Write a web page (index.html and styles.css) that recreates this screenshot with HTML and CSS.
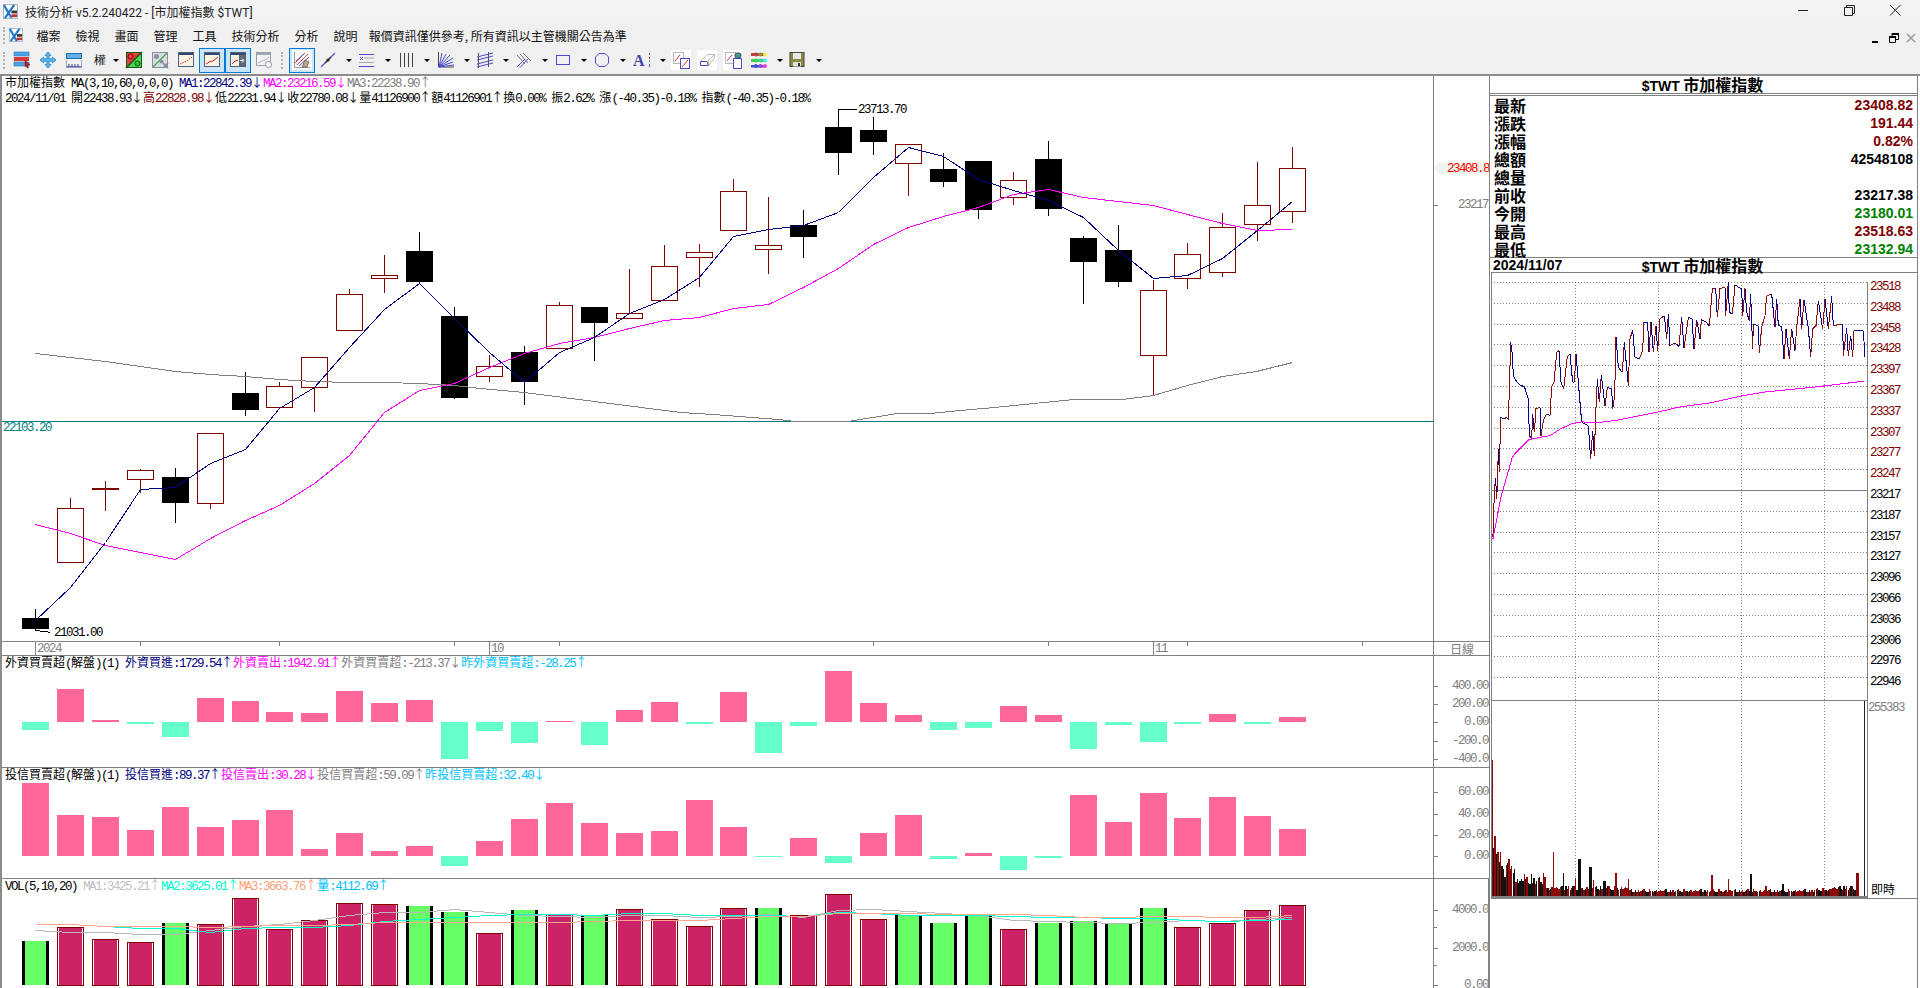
FILE: index.html
```html
<!DOCTYPE html>
<html lang="zh-Hant">
<head>
  <meta charset="UTF-8" />
  <title>技術分析 v5.2.240422 - [市加權指數 $TWT]</title>
  <link rel="stylesheet" href="styles.css">
</head>
<body>
  <!-- Window title -->
  <div class="titlebar">
    <svg class="logo" viewBox="0 0 16 16"><rect x="0.500" y="0.500" width="15" height="15" fill="#fff" stroke="#a8b4c4"/><path d="M1 1 L9 15 M12 1 L2 15" stroke="#1f78c8" stroke-width="2.400" fill="none"/><rect x="9" y="7" width="6" height="3" fill="#333"/><rect x="9" y="11" width="6" height="3" fill="#c03030"/></svg>
    <span class="title-text">技術分析 v5.2.240422 - [市加權指數 $TWT]</span>
    <div class="win-btns">
      <svg class="win-btn" viewBox="0 0 46 16"><path d="M18 8.500 H28" stroke="#222"/></svg>
      <svg class="win-btn" viewBox="0 0 46 16"><path d="M18.500 5.500 H26.500 V13.500 H18.500 Z M20.500 5 V3.500 H28.500 V11.500 H27" stroke="#222" fill="none"/></svg>
      <svg class="win-btn" viewBox="0 0 46 16"><path d="M18 3 L28.500 13.500 M28.500 3 L18 13.500" stroke="#222" fill="none"/></svg>
    </div>
  </div>

  <!-- Menu -->
  <div class="menubar">
    <span class="grip"></span>
    <svg class="logo logo-menu" viewBox="0 0 16 16"><rect x="0.500" y="0.500" width="15" height="15" fill="#fff" stroke="#a8b4c4"/><path d="M1 1 L9 15 M12 1 L2 15" stroke="#1f78c8" stroke-width="2.400" fill="none"/><rect x="9" y="7" width="6" height="3" fill="#333"/><rect x="9" y="11" width="6" height="3" fill="#c03030"/></svg>
    <span class="menu-item">檔案</span>
    <span class="menu-item">檢視</span>
    <span class="menu-item">畫面</span>
    <span class="menu-item">管理</span>
    <span class="menu-item">工具</span>
    <span class="menu-item">技術分析</span>
    <span class="menu-item">分析</span>
    <span class="menu-item">說明</span>
    <span class="menu-item menu-note">報價資訊僅供參考, 所有資訊以主管機關公告為準</span>
    <div class="mdi-btns">
      <svg class="mdi-btn" viewBox="0 0 14 14"><rect x="2" y="10" width="6" height="2" fill="#000"/></svg>
      <svg class="mdi-btn" viewBox="0 0 14 14"><path d="M2.500 5.500 H8.500 V11.500 H2.500 Z M5 5 V2.500 H11.500 V8.500 H9" stroke="#000" fill="none"/><rect x="2" y="5" width="7" height="2"/><rect x="5" y="2" width="7" height="2"/></svg>
      <svg class="mdi-btn" viewBox="0 0 14 14"><path d="M3 3 L11 11 M11 3 L3 11" stroke="#999" stroke-width="1.500"/></svg>
    </div>
  </div>

  <!-- Tool buttons -->
  <div class="toolbar">
    <span class="grip"></span>
    <button class="tool"><svg class="ico" viewBox="0 0 16 16"><rect x="0" y="0" width="15" height="4" fill="#4aa3e0" stroke="#2a7ab8" stroke-width="0.600"/><rect x="0" y="5" width="15" height="4" fill="#d83838"/><rect x="0" y="10" width="15" height="4" fill="#4aa3e0" stroke="#2a7ab8" stroke-width="0.600"/><path d="M11 8 L16 13 H13.500 L14.500 16 L13 16 L12 13.500 L11 15 Z" fill="#c02020" stroke="#701010" stroke-width="0.400"/></svg></button>
    <button class="tool"><svg class="ico" viewBox="0 0 16 16"><path d="M8 0 L11 3.500 H9.200 V6.800 H12.500 V5 L16 8 L12.500 11 V9.200 H9.200 V12.500 H11 L8 16 L5 12.500 H6.800 V9.200 H3.500 V11 L0 8 L3.500 5 V6.800 H6.800 V3.500 H5 Z" fill="#58b4ee" stroke="#1f7fc4" stroke-width="0.700"/></svg></button>
    <button class="tool"><svg class="ico" viewBox="0 0 16 16"><rect x="0.500" y="1.500" width="15" height="5" fill="#5fb2ea" stroke="#1f6fa8"/><path d="M0.500 8 V14.500 H15.500 V8" fill="none" stroke="#a8a8c8"/><path d="M0 15 H16 M3 12 V15 M6 12 V15 M9 12 V15 M12 12 V15" stroke="#4040a0" fill="none"/></svg></button>
    <button class="tool"><span class="tool-text">權</span></button>
    <span class="drop drop-narrow"></span>
    <button class="tool"><svg class="ico" viewBox="0 0 16 16"><path d="M0 0 H16 L0 16 Z" fill="#e04040"/><path d="M16 0 V16 H0 Z" fill="#50d050"/><path d="M16 0 L0 16" stroke="#0c5c0c" stroke-width="1.400"/><rect x="0.500" y="0.500" width="15" height="15" fill="none" stroke="#155c15"/><circle cx="4.500" cy="4.500" r="2.500" fill="#f04040" stroke="#800"/><circle cx="11.500" cy="11.500" r="2.500" fill="#30c030" stroke="#0a600a"/></svg></button>
    <button class="tool"><svg class="ico" viewBox="0 0 16 16"><rect x="0.500" y="0.500" width="15" height="15" fill="#d8dce0" stroke="#8a90a0"/><path d="M15 1 L1 15" stroke="#4ca84c" stroke-width="1.200"/><circle cx="4.500" cy="4.500" r="2.500" fill="#8890a0"/><circle cx="9.500" cy="9.500" r="2" fill="#8890a0"/><path d="M11 11 L16 16 M16 11 L11 16" stroke="#808898" stroke-width="1.500"/></svg></button>
    <button class="tool"><svg class="ico" viewBox="0 0 16 16"><rect x="0.500" y="0.500" width="15" height="14" fill="#f8f4e4" stroke="#50607c"/><rect x="1" y="1" width="14" height="2" fill="#304878"/><path d="M2 12 L6 10 L9 9 L14 5" stroke="#e02020" stroke-dasharray="1.500 1" fill="none"/></svg></button>
    <button class="tool tool-on"><svg class="ico" viewBox="0 0 16 16"><rect x="0.500" y="0.500" width="15" height="14" fill="#f8f4e4" stroke="#50607c"/><rect x="1" y="1" width="14" height="2" fill="#304878"/><path d="M2 12 L6 9.500 L9 9 L14 5" stroke="#e02020" fill="none"/></svg></button>
    <button class="tool tool-on"><svg class="ico" viewBox="0 0 16 16"><rect x="0.500" y="0.500" width="15" height="14" fill="#f8f4e4" stroke="#50607c"/><rect x="1" y="1" width="14" height="2" fill="#304878"/><rect x="9" y="3" width="6" height="11" fill="#606870"/><path d="M2 12 L5 9 L8 8" stroke="#e02020" fill="none"/><path d="M10 8.500 H13 M12 6.500 L14 8.500 L12 10.500" stroke="#fff" fill="none"/></svg></button>
    <button class="tool"><svg class="ico" viewBox="0 0 16 16"><rect x="0.500" y="0.500" width="14" height="13" fill="#f2f2f2" stroke="#9aa0ac"/><rect x="1" y="1" width="13" height="2" fill="#a0a8b8"/><path d="M2 11 L6 9 L9 8 L13 5" stroke="#b8b8b8" fill="none"/><circle cx="12.500" cy="12.500" r="3" fill="#fff" stroke="#8a92a0"/></svg></button>
    <span class="grip grip-mid"></span>
    <button class="tool tool-on tool-white"><svg class="ico" viewBox="0 0 16 16"><path d="M0.500 0 V15.500 H16" stroke="#9a9aa8" fill="none"/><path d="M1 11 L11 1 M3 13 L14 2" stroke="#e04848" fill="none"/><path d="M2 9 L10 2 M5 14 L15 5" stroke="#5050c0" fill="none"/><path d="M8 15 L11 8 L15 10 L13 15 Z" fill="#b8a890" stroke="#704848" stroke-width="0.700"/></svg></button>
    <button class="tool"><svg class="ico" viewBox="0 0 16 16"><path d="M1 15 L15 1" stroke="#4a4ad0" stroke-width="1.100"/><path d="M5 11 L11 5" stroke="#333" stroke-width="1.300"/><circle cx="8" cy="8" r="1.500" fill="#222"/></svg></button>
    <span class="drop"></span>
    <button class="tool"><svg class="ico" viewBox="0 0 16 16"><path d="M0 2.500 H15 M0 14.500 H15" stroke="#4a4ad0"/><path d="M5 6 H15 M0 10.500 H15" stroke="#aaa"/><path d="M1 5 L4 8 M4 5 L1 8" stroke="#4a4ad0"/></svg></button>
    <span class="drop"></span>
    <button class="tool"><svg class="ico" viewBox="0 0 16 16"><path d="M2.500 1 V15 M6.500 1 V15 M10.500 1 V15 M14.500 1 V15" stroke="#444"/></svg></button>
    <span class="drop"></span>
    <button class="tool"><svg class="ico" viewBox="0 0 16 16"><path d="M0.500 0 V15 H16" stroke="#444" fill="none"/><path d="M1 15 L4 1 M1 15 L8 2 M1 15 L12 3 M1 15 L15 6 M1 15 L15 10 M1 15 L16 13" stroke="#4a4ad0"/></svg></button>
    <span class="drop"></span>
    <button class="tool"><svg class="ico" viewBox="0 0 16 16"><path d="M0 5 L16 1 M0 8 L16 4 M0 12 L16 8 M0 15 L16 11" stroke="#4a4ad0"/><path d="M1.500 1 V16 M11.500 0 V15" stroke="#555"/></svg></button>
    <span class="drop"></span>
    <button class="tool"><svg class="ico" viewBox="0 0 16 16"><path d="M1 15 L9 7 M4 15.500 L13 6" stroke="#4a4ad0"/><path d="M1 3 L9 12 M4 2 L12 11 M7 1 L15 9" stroke="#777"/></svg></button>
    <span class="drop"></span>
    <button class="tool"><svg class="ico" viewBox="0 0 16 16"><rect x="1.500" y="3.500" width="13" height="9" fill="none" stroke="#4a4ad8"/></svg></button>
    <span class="drop"></span>
    <button class="tool"><svg class="ico" viewBox="0 0 16 16"><path d="M5 1.500 H11 L14.500 5 V11 L11 14.500 H5 L1.500 11 V5 Z" fill="none" stroke="#4a4ad8"/></svg></button>
    <span class="drop"></span>
    <button class="tool"><svg class="ico ico-wide" viewBox="0 0 18 16"><text x="0" y="14" class="ico-a">A</text><path d="M16.500 1 V3 M16.500 5 V7" stroke="#b04040"/><path d="M16.500 8 V10" stroke="#40a040"/><path d="M16.500 12 V15" stroke="#4a4ad0"/></svg></button>
    <span class="drop"></span>
    <button class="tool tool-page"><svg class="ico ico-page" viewBox="0 0 20 20"><rect width="20" height="20" fill="#fff"/><rect x="2.500" y="2.500" width="10" height="11" fill="#fff" stroke="#bbb"/><rect x="9.500" y="8.500" width="9" height="10" fill="#fff" stroke="#4a4ad0"/><path d="M4 11 L9 5" stroke="#e03030"/><path d="M11 17 L17 10" stroke="#e03030"/></svg></button>
    <button class="tool tool-page"><svg class="ico ico-page" viewBox="0 0 20 20"><rect width="20" height="20" fill="#fff"/><path d="M3.500 11.500 L10 4.500 H17.500 V8 L11.500 15.500 H3.500 Z" fill="#fff" stroke="#bbb"/><path d="M3.500 11.500 H10 L11.500 15.500 H3.500 Z" fill="#fff" stroke="#4a4ad0"/><path d="M10.500 11.500 L17.500 4.500" stroke="#bbb"/><path d="M11 11 V15" stroke="#a0a030"/></svg></button>
    <button class="tool tool-page"><svg class="ico ico-page" viewBox="0 0 20 20"><rect width="20" height="20" fill="#fff"/><rect x="2.500" y="2.500" width="10" height="11" fill="#fff" stroke="#bbb"/><rect x="10.500" y="8.500" width="8" height="10" fill="#fff" stroke="#4a4ad0"/><path d="M4 11 L9 5" stroke="#e03030"/><rect x="12" y="3" width="6" height="5" rx="2" fill="#40a080" stroke="#404080"/></svg></button>
    <button class="tool"><svg class="ico" viewBox="0 0 16 16"><rect x="0" y="1" width="15" height="3" fill="#c04040"/><circle cx="5" cy="2.500" r="2" fill="#c04040"/><circle cx="9.500" cy="2.500" r="2" fill="#909040"/><circle cx="14" cy="2.500" r="2" fill="#f4f040"/><rect x="0" y="7" width="15" height="3" fill="#40d050"/><circle cx="5" cy="8.500" r="2" fill="#40d050"/><circle cx="9.500" cy="8.500" r="2" fill="#40d0a0"/><circle cx="14" cy="8.500" r="2" fill="#40f0f0"/><rect x="0" y="13" width="15" height="2.500" fill="#4050d0"/><circle cx="5" cy="14" r="2" fill="#4050d0"/><circle cx="9.500" cy="14" r="2" fill="#a040d0"/><circle cx="14" cy="14" r="2" fill="#f040e0"/></svg></button>
    <span class="drop"></span>
    <button class="tool"><svg class="ico" viewBox="0 0 16 16"><rect x="0" y="0.500" width="14" height="14" fill="#8a8a40" stroke="#444"/><rect x="3" y="1" width="8" height="6" fill="#e8e8e8"/><rect x="3" y="10" width="8" height="4.500" fill="#e0e0e0"/><rect x="8" y="11" width="2" height="3" fill="#333"/></svg></button>
    <span class="drop"></span>
  </div>

  <div class="workspace">
    <div class="charts">
      <!-- Price pane -->
      <section class="pane pane-price">
        <div class="plot">
          <div class="legend">
            <div class="legend-row"><span class="cj">市加權指數</span> MA(3,10,60,0,0,0) <span class="c-navy">MA1:22842.39<span class="cj">↓</span></span><span class="c-pink">MA2:23216.59<span class="cj">↓</span></span><span class="c-gray">MA3:22238.90<span class="cj">↑</span></span></div>
            <div class="legend-row">2024/11/01 <span class="cj">開</span>22438.93<span class="cj">↓</span><span class="c-red"><span class="cj">高</span>22828.98<span class="cj">↓</span></span><span class="cj">低</span>22231.94<span class="cj">↓</span><span class="cj">收</span>22780.08<span class="cj">↓</span><span class="cj">量</span>41126900<span class="cj">↑</span><span class="cj">額</span>41126901<span class="cj">↑</span><span class="cj">換</span>0.00% <span class="cj">振</span>2.62% <span class="cj">漲</span>(-40.35)-0.18% <span class="cj">指數</span>(-40.35)-0.18%</div>
          </div>
          <svg id="priceChart" class="canvas" viewBox="2 76 1431 565" width="1431" height="565"></svg>
        </div>
        <div class="axis"><svg id="priceAxis" class="canvas" viewBox="1434 76 55 565" width="55" height="565"></svg></div>
      </section>

      <!-- Date row -->
      <section class="pane pane-time">
        <div class="plot"><svg id="timeChart" class="canvas" viewBox="2 642 1431 13" width="1431" height="13"></svg></div>
        <div class="axis axis-period"><span class="cj">日線</span></div>
      </section>

      <!-- Foreign investors -->
      <section class="pane pane-foreign">
        <div class="plot">
          <div class="legend">
            <div class="legend-row"><span class="cj">外資買賣超</span>(<span class="cj">解盤</span>)(1) <span class="c-navy"><span class="cj">外資買進</span>:1729.54<span class="cj">↑</span></span><span class="c-pink"><span class="cj">外資賣出</span>:1942.91<span class="cj">↑</span></span><span class="c-gray"><span class="cj">外資買賣超</span>:-213.37<span class="cj">↓</span></span><span class="c-sky"><span class="cj">昨外資買賣超</span>:-28.25<span class="cj">↑</span></span></div>
          </div>
          <svg id="foreignChart" class="canvas" viewBox="2 656 1431 111" width="1431" height="111"></svg>
        </div>
        <div class="axis"><svg id="foreignAxis" class="canvas" viewBox="1434 656 55 111" width="55" height="111"></svg></div>
      </section>

      <!-- Trust funds -->
      <section class="pane pane-trust">
        <div class="plot">
          <div class="legend">
            <div class="legend-row"><span class="cj">投信買賣超</span>(<span class="cj">解盤</span>)(1) <span class="c-navy"><span class="cj">投信買進</span>:89.37<span class="cj">↑</span></span><span class="c-pink"><span class="cj">投信賣出</span>:30.28<span class="cj">↓</span></span><span class="c-gray"><span class="cj">投信買賣超</span>:59.09<span class="cj">↑</span></span><span class="c-sky"><span class="cj">昨投信買賣超</span>:32.40<span class="cj">↓</span></span></div>
          </div>
          <svg id="trustChart" class="canvas" viewBox="2 768 1431 110" width="1431" height="110"></svg>
        </div>
        <div class="axis"><svg id="trustAxis" class="canvas" viewBox="1434 768 55 110" width="55" height="110"></svg></div>
      </section>

      <!-- Volume -->
      <section class="pane pane-vol">
        <div class="plot">
          <div class="legend">
            <div class="legend-row">VOL(5,10,20) <span class="c-silver">MA1:3425.21<span class="cj">↑</span></span><span class="c-aqua">MA2:3625.01<span class="cj">↑</span></span><span class="c-salmon">MA3:3663.76<span class="cj">↑</span></span><span class="c-sky"><span class="cj">量</span>:4112.69<span class="cj">↑</span></span></div>
          </div>
          <svg id="volChart" class="canvas" viewBox="2 879 1431 109" width="1431" height="109"></svg>
        </div>
        <div class="axis"><svg id="volAxis" class="canvas" viewBox="1434 879 54 109" width="54" height="109"></svg></div>
      </section>
    </div>

    <!-- Quote panel -->
    <aside class="side">
      <div class="side-head"><span class="lat">$TWT</span> 市加權指數</div>
      <div class="quote">
        <div class="quote-row"><span>最新</span><span class="val up">23408.82</span></div>
        <div class="quote-row"><span>漲跌</span><span class="val up">191.44</span></div>
        <div class="quote-row"><span>漲幅</span><span class="val up">0.82%</span></div>
        <div class="quote-row"><span>總額</span><span class="val">42548108</span></div>
        <div class="quote-row"><span>總量</span><span class="val"></span></div>
        <div class="quote-row"><span>前收</span><span class="val">23217.38</span></div>
        <div class="quote-row"><span>今開</span><span class="val down">23180.01</span></div>
        <div class="quote-row"><span>最高</span><span class="val up">23518.63</span></div>
        <div class="quote-row"><span>最低</span><span class="val down">23132.94</span></div>
      </div>
      <div class="day-head"><span class="day-date">2024/11/07</span><span class="lat">$TWT</span> 市加權指數</div>
      <svg id="dayChart" class="day-chart" viewBox="1490 273 427 715" width="427" height="715"></svg>
    </aside>
  </div>

  <script src="chart.js"></script>
</body>
</html>
```

FILE: styles.css
```css
html, body {
  margin: 0;
  height: 988px;
  overflow: hidden;
  background: #fff;
  font-family: "Noto Sans CJK TC", sans-serif;
  font-size: 12px;
  color: #000;
}

/* title, menu, toolbar */
.titlebar {
  height: 23px;
  display: flex;
  align-items: center;
  background: #f3f3f5;
}
.logo {
  width: 15px;
  height: 15px;
  margin-left: 3px;
  flex: none;
}
.title-text {
  margin-left: 7px;
  flex: none;
  font-family: Roboto, "Noto Sans CJK TC", sans-serif;
  font-size: 12px;
  color: #222;
}
.win-btns {
  margin-left: auto;
  display: flex;
  margin-right: 2px;
}
.win-btn {
  width: 46px;
  height: 16px;
  margin-top: -3px;
}
.menubar {
  height: 24px;
  padding-bottom: 1px;
  display: flex;
  align-items: center;
  background: #f0f0f0;
  font-size: 12px;
  color: #111;
}
.grip {
  width: 2px;
  height: 17px;
  margin: 0 2px 0 3px;
  flex: none;
  border-left: 2px dotted #b0b0b0;
}
.logo-menu {
  margin: 0 6px 0 0;
  width: 14px;
  height: 14px;
}
.menu-item {
  padding: 0 7.500px;
  white-space: nowrap;
}
.menu-note {
  padding-left: 3.500px;
}
.mdi-btns {
  margin-left: auto;
  display: flex;
  margin-right: 2px;
  margin-top: 5px;
}
.mdi-btn {
  width: 14px;
  height: 14px;
  margin-left: 3px;
}
.toolbar {
  height: 24px;
  padding-bottom: 2px;
  display: flex;
  align-items: center;
  background: #f0f0f0;
}
.tool {
  width: 26px;
  height: 25px;
  padding: 0;
  flex: none;
  border: none;
  background: none;
  display: flex;
  align-items: center;
  justify-content: center;
}
.tool-on {
  border: 1px solid #0078d7;
  background: #cce4f7;
}
.tool-white .ico {
  background: #fff;
  padding: 2px;
}
.tool-text {
  font-size: 12px;
  color: #111;
}
.ico {
  width: 16px;
  height: 16px;
  overflow: visible;
  box-sizing: content-box;
}
.ico-wide {
  width: 18px;
}
.ico-page {
  width: 20px;
  height: 20px;
}
.ico-a {
  font: bold 16px "Liberation Serif", serif;
  fill: #4444a8;
}
.drop {
  width: 13.2px;
  height: 3px;
  flex: none;
  position: relative;
}
.drop::after {
  content: "";
  position: absolute;
  left: 5px;
  top: 0;
  border-left: 3px solid transparent;
  border-right: 3px solid transparent;
  border-top: 3px solid #000;
}
.drop-narrow {
  width: 8px;
}
.drop-narrow::after {
  left: 0;
}
.toolbar .grip-mid {
  margin: 0 4px 0 4px;
}

/* chart column */
.workspace {
  height: 912px;
  display: flex;
  border-top: 2px solid #8c8c8c;
  border-left: 2px solid #8c8c8c;
}
.charts {
  width: 1487px;
  flex: none;
}
.pane {
  display: flex;
  border-bottom: 1px solid #808080;
}
.pane-price { height: 565px; }
.pane-time { height: 13px; }
.pane-foreign { height: 111px; }
.pane-trust { height: 110px; }
.pane-vol { height: 109px; border-bottom: none; }
.plot {
  position: relative;
  width: 1431px;
  flex: none;
}
.canvas {
  position: absolute;
  left: 0;
  top: 0;
  display: block;
}
.axis {
  position: relative;
  flex: 1;
  border-left: 1px solid #808080;
  overflow: hidden;
}
.pane-vol .axis {
  border-right: 1px solid #808080;
}
.axis-period {
  padding-left: 16px;
  font-size: 12px;
  line-height: 14px;
  color: #808080;
}
.legend {
  position: relative;
  z-index: 1;
  display: flex;
  flex-direction: column;
  gap: 1px;
  margin-top: -1px;
  padding-left: 3px;
}
.legend-row {
  font: 12.500px/14px "Liberation Mono", monospace;
  letter-spacing: -1.500px;
  white-space: pre;
  height: 14px;
}
.cj {
  font-family: "Noto Sans CJK TC", sans-serif;
  font-size: 12px;
  letter-spacing: 0;
}
.c-navy { color: #000080; }
.c-pink { color: #ff00ff; }
.c-gray { color: #808080; }
.c-red { color: #800000; }
.c-sky { color: #00bfff; }
.c-silver { color: #c0c0c0; }
.c-aqua { color: #00ffcc; }
.c-salmon { color: #ffa07a; }

/* svg text */
.num {
  font: 12.500px "Liberation Mono", monospace;
  letter-spacing: -1.500px;
  fill: #000;
}
.num-gray { fill: #808080; }
.num-red { fill: #ff0000; }
.num-dark { fill: #800000; }
.num-teal { fill: #008080; }
.zh-label {
  font: 12px "Noto Sans CJK TC", sans-serif;
  fill: #000;
}

/* quote panel */
.side {
  flex: 1;
  border-left: 1px solid #808080;
  border-right: 1px solid #808080;
  margin-right: 2px;
  min-width: 0;
}
.side-head {
  height: 18px;
  line-height: 17px;
  text-align: center;
  font-size: 16px;
  font-weight: 700;
  padding-right: 2px;
  border-bottom: 1px solid #808080;
  box-sizing: border-box;
}
.lat {
  font: bold 14px "Liberation Sans", sans-serif;
}
.quote {
  height: 161px;
  margin-top: 1px;
  border-top: 1px solid #808080;
  border-bottom: 1px solid #808080;
}
.quote-row {
  height: 18px;
  display: flex;
  justify-content: space-between;
  align-items: center;
  padding: 0 4px;
  font-size: 16px;
  font-weight: 700;
  line-height: 18px;
}
.quote .quote-row:last-child {
  height: 17px;
}
.val {
  font: bold 14px/18px "Liberation Sans", sans-serif;
}
.up { color: #800000; }
.down { color: #008000; }
.day-head {
  height: 14px;
  position: relative;
  font-size: 16px;
  font-weight: 700;
  line-height: 15px;
  text-align: center;
  padding-right: 2px;
}
.day-date {
  position: absolute;
  left: 3px;
  top: 0;
  font: bold 14px/15px "Liberation Sans", sans-serif;
}
.day-chart {
  display: block;
}
```

FILE: chart.js
```js
// candle centres, one per trading day
const xs = [35,70,105,140,175,210,245,279,314,349,384,419,454,489,524,559,594,629,664,699,733,768,803,838,873,908,943,978,1013,1048,1083,1118,1153,1187,1222,1257,1292];

// high, body top, body bottom, low, r = hollow red / k = black
const candles = [
  [609,618,629,630,"k"],[498,508,562,562,"r"],[481,488,488,510,"r"],[469,470,479,492,"r"],
  [468,477,503,522,"k"],[433,433,503,508,"r"],[372,393,410,415,"k"],[382,386,407,407,"r"],
  [357,357,387,411,"r"],[289,294,330,330,"r"],[255,275,278,292,"r"],[232,251,282,283,"k"],
  [307,316,398,398,"k"],[355,366,376,381,"r"],[346,352,382,404,"k"],[302,305,348,348,"r"],
  [307,307,323,360,"k"],[269,313,318,318,"r"],[245,266,300,300,"r"],[244,252,257,286,"r"],
  [179,191,230,230,"r"],[197,245,249,273,"r"],[210,225,237,257,"k"],[109,127,153,174,"k"],
  [117,130,142,154,"k"],[144,144,163,195,"r"],[153,169,182,186,"k"],[161,161,210,218,"k"],
  [172,180,197,204,"r"],[141,159,209,215,"k"],[236,238,262,303,"k"],[225,250,282,286,"k"],
  [280,290,355,395,"r"],[243,254,278,288,"r"],[213,227,272,276,"r"],[162,205,224,240,"r"],
  [147,168,211,222,"r"]
];

const ma1 = [620,587,542,489,487,463,449,408,387,347,309,283,318,352,382,352,337,313,299,277,236,229,225,212,177,147,156,179,190,200,217,250,278,275,258,230,201];
const ma2 = [524,533,545,552,559,538,520,505,483,455,412,390,383,367,353,343,337,328,320,317,308,304,287,268,244,227,216,207,194,189,197,201,205,214,223,230,229];
const ma3 = [[35,353],[70,357],[105,361],[140,366],[175,371],[210,374],[245,376],[279,379],[314,381],[349,382],[384,382],[419,383],[454,385],[480,388],[524,392],[594,401],[680,412],[713,414],[778,419],[795,421],[847,421],[897,413],[930,413],[960,410],[994,407],[1043,402],[1074,399],[1122,399],[1153,395],[1187,385],[1222,376],[1256,371],[1292,362]];

// bar ends, page y; zero line is the other end
const foreign = [730,689,720,724,737,698,701,712,713,691,703,700,759,731,743,721,745,710,702,724,692,753,726,671,703,715,730,728,706,715,749,725,742,724,714,724,717];
const trust = [783,815,817,830,807,827,820,810,849,833,851,846,866,841,819,803,823,833,831,800,827,857,838,863,833,815,859,853,870,858,795,822,793,818,797,816,829];
const volTop = [941,927,939,942,923,924,898,929,920,903,904,906,912,933,910,914,915,909,919,926,908,908,915,894,919,915,923,916,929,923,921,923,908,927,923,910,905];
const volGreen = [0,4,11,12,14,16,21,25,26,27,29,30,31,32];

const volMa1 = [930,932,932,934,934,930,926,924,920,915,912,912,909,912,915,916,917,915,915,917,916,914,917,910,909,911,913,915,920,921,922,923,922,920,921,919,917];
const volMa2 = [null,null,926,928,928,932,928,927,927,925,921,919,917,915,914,914,915,913,913,915,915,915,916,912,913,915,915,915,916,917,917,918,918,920,921,920,919];
const volMa3 = [924,924,926,926,926,927,926,925,925,924,922,922,922,922,922,922,921,920,920,920,918,916,916,913,913,913,914,914,914,915,917,917,916,916,917,917,915];

const NS = "http://www.w3.org/2000/svg";

function add(svg, tag, attrs, text) {
  const node = document.createElementNS(NS, tag);
  for (const key in attrs) node.setAttribute(key, attrs[key]);
  if (text !== undefined) node.textContent = text;
  svg.appendChild(node);
  return node;
}

function hline(svg, x1, x2, y, color, extra) {
  add(svg, "line", Object.assign({ x1, x2, y1: y + 0.5, y2: y + 0.5, stroke: color, "shape-rendering": "crispEdges" }, extra));
}

function vline(svg, x, y1, y2, color, extra) {
  add(svg, "line", Object.assign({ x1: x + 0.5, x2: x + 0.5, y1, y2, stroke: color, "shape-rendering": "crispEdges" }, extra));
}

function box(svg, x, y, w, h, fill) {
  add(svg, "rect", { x, y, width: w, height: h, fill, "shape-rendering": "crispEdges" });
}

function trend(svg, points, color) {
  const pts = points.map(p => (p[0] + 0.5) + "," + (p[1] + 0.5)).join(" ");
  add(svg, "polyline", { points: pts, fill: "none", stroke: color, "shape-rendering": "crispEdges" });
}

function byDay(values) {
  const pts = [];
  values.forEach((y, i) => { if (y !== null) pts.push([xs[i], y]); });
  return pts;
}

function num(svg, x, y, value, cls, anchor) {
  add(svg, "text", { x, y, class: "num " + (cls || ""), "text-anchor": anchor || "start" }, value);
}

// main price chart
function drawPrice() {
  const svg = document.getElementById("priceChart");
  hline(svg, 2, 1433, 421, "#008080");
  candles.forEach((c, i) => {
    const x = xs[i];
    const color = c[4] === "r" ? "#800000" : "#000";
    vline(svg, x, c[0], c[3] + 1, color);
    if (c[4] === "r") {
      box(svg, x - 13, c[1], 27, Math.max(c[2] - c[1], 1) + 1, "#800000");
      if (c[2] - c[1] > 1) box(svg, x - 12, c[1] + 1, 25, c[2] - c[1] - 1, "#fff");
    } else {
      box(svg, x - 13, c[1], 27, c[2] - c[1], "#000");
    }
  });
  trend(svg, ma3, "#808080");
  trend(svg, byDay(ma2), "#ff00ff");
  trend(svg, byDay(ma1), "#000080");

  // hi and lo notes
  num(svg, 3, 431, "22103.20", "num-teal");
  trend(svg, [[35, 630], [44, 631], [50, 632]], "#000");
  num(svg, 54, 636, "21031.00");
  trend(svg, [[838, 127], [838, 109], [856, 109]], "#000");
  num(svg, 858, 113, "23713.70");

  const axis = document.getElementById("priceAxis");
  add(axis, "polygon", { points: "1434,168 1439,162 1488,162 1488,174 1439,174", fill: "#eef7ee" });
  num(axis, 1489, 172, "23408.8", "num-red", "end");
  hline(axis, 1434, 1438, 205, "#808080");
  num(axis, 1488, 208, "23217", "num-gray", "end");
}

// date row
function drawTime() {
  const svg = document.getElementById("timeChart");
  [140, 279, 454, 559, 873, 1048, 1187, 1362].forEach(x => vline(svg, x, 642, 646, "#808080"));
  [[35, "2024"], [489, "10"], [1153, "11"]].forEach(t => {
    vline(svg, t[0], 642, 655, "#808080");
    num(svg, t[0] + 2, 652, t[1], "num-gray");
  });
}

function drawBars(id, ends, zero) {
  const svg = document.getElementById(id);
  ends.forEach((y, i) => {
    const x = xs[i] - 13;
    if (y < zero) box(svg, x, y, 27, zero - y, "#ff6699");
    else box(svg, x, zero, 27, y - zero, "#66ffcc");
  });
}

function drawAxisLabels(id, rows) {
  const svg = document.getElementById(id);
  rows.forEach(r => {
    hline(svg, 1434, 1438, r[0], "#808080");
    if (r[2]) num(svg, r[2], r[0] + 3, r[1], "num-gray");
    else num(svg, 1488, r[0] + 3, r[1], "num-gray", "end");
  });
}

function drawVolume() {
  const svg = document.getElementById("volChart");
  volTop.forEach((y, i) => {
    const x = xs[i] - 13;
    if (volGreen.includes(i)) {
      box(svg, x, y, 27, 985 - y, "#66ff66");
      box(svg, x, y, 3, 985 - y, "#000");
      box(svg, x + 24, y, 3, 985 - y, "#000");
    } else {
      box(svg, x, y, 27, 986 - y, "#800000");
      box(svg, x + 1, y + 1, 25, 984 - y, "#fff");
      box(svg, x + 2, y + 1, 23, 984 - y, "#cc2266");
    }
  });
  trend(svg, byDay(volMa1), "#b8b8b8");
  trend(svg, byDay(volMa2), "#00ffcc");
  trend(svg, byDay(volMa3), "#ffa590");

  const axis = document.getElementById("volAxis");
  [927, 965].forEach(y => hline(axis, 1434, 1437, y, "#808080"));
}

// intraday line, traced from the quote window
const dayLine = [[37,805],[40,790],[43,660],[47,628],[50,690],[52,650],[55,540],[58,610],[62,445],[72,450],[80,445],[85,452],[88,365],[92,220],[97,255],[100,320],[110,338],[122,350],[133,352],[145,390],[148,500],[155,510],[158,435],[163,490],[168,418],[180,416],[183,500],[190,455],[200,435],[210,440],[215,352],[222,340],[230,250],[237,245],[243,340],[251,360],[262,262],[270,255],[278,340],[283,340],[288,255],[295,340],[305,460],[325,470],[332,570],[338,485],[343,560],[347,435],[352,330],[358,400],[364,318],[375,412],[382,355],[395,360],[398,420],[404,380],[408,205],[415,295],[427,310],[433,220],[445,350],[450,210],[458,182],[465,265],[478,270],[488,245],[492,160],[503,162],[507,250],[513,158],[520,250],[528,170],[533,245],[540,150],[553,140],[560,210],[565,135],[570,230],[585,222],[597,232],[605,145],[612,238],[625,145],[636,150],[642,240],[650,152],[660,210],[664,152],[680,160],[688,172],[697,60],[707,58],[712,145],[720,58],[735,55],[737,140],[745,40],[748,130],[757,135],[765,48],[785,60],[788,140],[795,58],[800,130],[808,155],[812,75],[818,240],[820,165],[835,170],[838,253],[845,175],[855,140],[860,80],[875,75],[885,175],[890,90],[895,170],[905,172],[912,270],[918,180],[928,270],[935,180],[945,245],[950,175],[960,90],[965,180],[972,92],[985,178],[992,263],[998,180],[1008,170],[1015,95],[1028,180],[1035,90],[1045,180],[1055,82],[1060,170],[1088,165],[1090,260],[1100,178],[1105,262],[1112,200],[1118,265],[1122,185],[1150,185],[1155,265]];
const dayAvg = [[37,810],[62,680],[95,565],[105,550],[145,510],[210,498],[240,478],[275,462],[305,457],[345,460],[405,453],[530,428],[600,412],[690,400],[780,380],[850,368],[1000,353],[1150,335]];

// tall minute bars, keyed by trace x, negative = black
const daySpikes = { 37:137, 40:-49, 46:61, 49:-43, 55:45, 58:-35, 61:45, 67:-31, 70:-28, 79:32, 82:-34, 88:38, 91:28, 94:31, 100:-24, 103:-28, 133:23, 154:-23, 190:24, 220:45, 250:-24, 286:19, 298:-38, 331:-30, 343:17, 373:-16, 409:24, 445:18, 697:22, 745:18, 814:-23, 858:11, 907:-13, 1132:24 };

function dayX(zx) { return 1480 + zx / 3; }
function dayY(zy) { return 270 + zy / 3; }

function drawDay() {
  const svg = document.getElementById("dayChart");
  const rows = [[283,"23518",1],[304,"23488",1],[325,"23458",1],[345,"23428",1],[366,"23397",1],[387,"23367",1],[408,"23337",1],[429,"23307",1],[449,"23277",1],[470,"23247",1],[491,"23217",0],[512,"23187",0],[533,"23157",0],[553,"23127",0],[574,"23096",0],[595,"23066",0],[616,"23036",0],[637,"23006",0],[657,"22976",0],[678,"22946",0]];

  rows.forEach(r => {
    if (r[0] !== 491) hline(svg, 1491, 1867, r[0], "#808080", { "stroke-dasharray": "1 2" });
    num(svg, 1870, r[0] + 8, r[1], r[2] ? "num-dark" : "");
  });
  hline(svg, 1491, 1867, 491, "#808080");
  [1575, 1658, 1741, 1824].forEach(x => vline(svg, x, 283, 898, "#808080", { "stroke-dasharray": "1 2" }));

  // frames
  hline(svg, 1491, 1917, 273, "#808080");
  vline(svg, 1491, 273, 899, "#808080");
  vline(svg, 1867, 283, 899, "#808080");
  hline(svg, 1491, 1867, 701, "#808080");
  hline(svg, 1491, 1917, 899, "#808080");
  vline(svg, 1864, 702, 898, "#222");
  num(svg, 1868, 712, "255383", "num-gray");
  add(svg, "text", { x: 1871, y: 895, class: "zh-label" }, "即時");

  // minute volume
  let seed = 11;
  for (let i = 0; i < 264; i++) {
    const zx = 37 + Math.round(i * 4.17);
    seed = (seed * 37 + 17) % 101;
    let base = 7;
    if (zx < 200) base = 18;
    else if (zx < 450) base = 10;
    else if (zx > 1050) base = 10;
    else if (zx > 1000) base = 8;
    let h = Math.round(base * (0.7 + (seed % 7) / 14));
    let dark = zx > 60 && zx < 190 ? seed % 4 !== 0 : seed % 2 === 0;
    for (const key in daySpikes) {
      if (Math.abs(zx - key) < 2.2) {
        h = Math.abs(daySpikes[key]);
        dark = daySpikes[key] < 0;
      }
    }
    box(svg, dayX(zx) - 0.6, 898 - h, 1.2, h, dark ? "#111" : "#8b0a0a");
  }
  box(svg, 1491, 897, 377, 2, "#808080");

  // price line: up strokes red, down strokes navy
  for (let i = 1; i < dayLine.length; i++) {
    const a = dayLine[i - 1], b = dayLine[i];
    add(svg, "line", {
      x1: dayX(a[0]), y1: dayY(a[1]), x2: dayX(b[0]), y2: dayY(b[1]),
      stroke: b[1] < a[1] ? "#8b0a0a" : "#000090", "shape-rendering": "crispEdges"
    });
  }
  trend(svg, dayAvg.map(p => [dayX(p[0]), dayY(p[1])]), "#ff00ff");
}

drawPrice();
drawTime();
drawBars("foreignChart", foreign, 722);
drawBars("trustChart", trust, 856);
drawVolume();
drawDay();

drawAxisLabels("foreignAxis", [[686, "400.00"], [704, "200.00"], [722, "0.00"], [741, "-200.00", 1452], [759, "-400.00", 1452]]);
drawAxisLabels("trustAxis", [[792, "60.00"], [814, "40.00"], [835, "20.00"], [856, "0.00"]]);
drawAxisLabels("volAxis", [[910, "4000.00", 1452], [948, "2000.00", 1452], [985, "0.00"]]);
```
